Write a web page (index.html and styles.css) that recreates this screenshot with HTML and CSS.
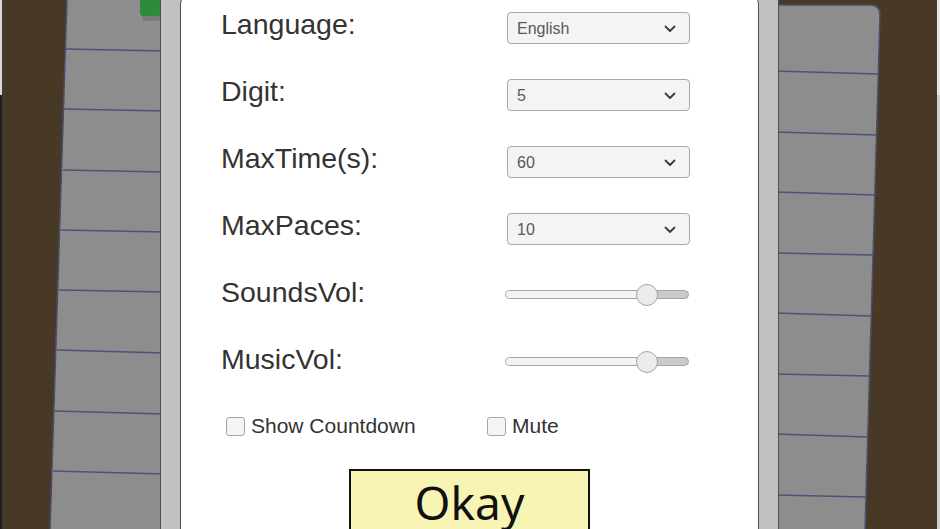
FILE: index.html
```html
<!DOCTYPE html>
<html>
<head>
    <title>Settings</title>
    <link rel="stylesheet" href="styles.css">
</head>
<body>
    <svg class="scene" width="940" height="529" viewBox="0 0 940 529">
        <rect x="0" y="0" width="940" height="529" fill="#473925"/>
        <rect x="0" y="0" width="2" height="95" fill="#d8d8d8"/>
        <rect x="0" y="95" width="2" height="434" fill="#1e1e1e"/>
        <rect x="937" y="0" width="3" height="95" fill="#e6e6e6"/>
        <rect x="937" y="95" width="3" height="434" fill="#cfcfcf"/>

        <!-- left board -->
        <polygon points="67,-2 170,-2 170,531 50,531" fill="#8d8d8d" stroke="#4d4d6e" stroke-width="1.5"/>
        <g stroke="#50507a" stroke-width="1.5">
            <line x1="66" y1="49" x2="165" y2="51"/>
            <line x1="64" y1="109" x2="165" y2="111"/>
            <line x1="63" y1="170" x2="165" y2="172"/>
            <line x1="61" y1="230" x2="165" y2="232"/>
            <line x1="59" y1="290" x2="165" y2="292"/>
            <line x1="57" y1="350" x2="165" y2="353"/>
            <line x1="55" y1="411" x2="165" y2="414"/>
            <line x1="53" y1="471" x2="165" y2="474"/>
        </g>
        <rect x="142" y="0" width="19" height="21" rx="4" fill="#7a7a7a"/>
        <path d="M140 -4 H160 V13 Q160 16 157 16 H143 Q140 16 140 13 Z" fill="#2e8a3c"/>

        <!-- right board -->
        <path d="M775 5 H870 Q880 5 880 15 L865 531 H775 Z" fill="#8d8d8d" stroke="#4d4d6e" stroke-width="1.5"/>
        <g stroke="#50507a" stroke-width="1.5">
            <line x1="775" y1="71" x2="879" y2="74"/>
            <line x1="775" y1="132" x2="877" y2="135"/>
            <line x1="775" y1="192" x2="875" y2="195"/>
            <line x1="775" y1="253" x2="873" y2="255"/>
            <line x1="775" y1="313" x2="871" y2="316"/>
            <line x1="775" y1="374" x2="869" y2="376"/>
            <line x1="775" y1="434" x2="868" y2="437"/>
            <line x1="775" y1="495" x2="866" y2="497"/>
        </g>
    </svg>

    <div class="frame">
        <div class="panel">
            <div class="row">
                <span class="label">Language:</span>
                <div class="select">
                    <span>English</span>
                    <svg class="chevron" width="12" height="8" viewBox="0 0 12 8"><path d="M1.5 1.5 L6 6 L10.5 1.5" fill="none" stroke="#3c3c3c" stroke-width="1.8" stroke-linecap="round" stroke-linejoin="round"/></svg>
                </div>
            </div>
            <div class="row">
                <span class="label">Digit:</span>
                <div class="select">
                    <span>5</span>
                    <svg class="chevron" width="12" height="8" viewBox="0 0 12 8"><path d="M1.5 1.5 L6 6 L10.5 1.5" fill="none" stroke="#3c3c3c" stroke-width="1.8" stroke-linecap="round" stroke-linejoin="round"/></svg>
                </div>
            </div>
            <div class="row">
                <span class="label">MaxTime(s):</span>
                <div class="select">
                    <span>60</span>
                    <svg class="chevron" width="12" height="8" viewBox="0 0 12 8"><path d="M1.5 1.5 L6 6 L10.5 1.5" fill="none" stroke="#3c3c3c" stroke-width="1.8" stroke-linecap="round" stroke-linejoin="round"/></svg>
                </div>
            </div>
            <div class="row">
                <span class="label">MaxPaces:</span>
                <div class="select">
                    <span>10</span>
                    <svg class="chevron" width="12" height="8" viewBox="0 0 12 8"><path d="M1.5 1.5 L6 6 L10.5 1.5" fill="none" stroke="#3c3c3c" stroke-width="1.8" stroke-linecap="round" stroke-linejoin="round"/></svg>
                </div>
            </div>
            <div class="row">
                <span class="label">SoundsVol:</span>
                <div class="slider">
                    <div class="fill" style="width: 77%"></div>
                    <div class="thumb" style="left: 77%"></div>
                </div>
            </div>
            <div class="row">
                <span class="label">MusicVol:</span>
                <div class="slider">
                    <div class="fill" style="width: 77%"></div>
                    <div class="thumb" style="left: 77%"></div>
                </div>
            </div>

            <div class="checks">
                <label class="check first"><span class="box"></span>Show Countdown</label>
                <label class="check"><span class="box"></span>Mute</label>
            </div>

            <div class="okay">Okay</div>
        </div>
    </div>
</body>
</html>
```

FILE: styles.css
```css
body {
    margin: 0;
    width: 940px;
    height: 529px;
    overflow: hidden;
    position: relative;
    display: flex;
    justify-content: center;
    background: #473925;
    font-family: 'Liberation Sans', Arial, sans-serif;
}
.scene {
    position: absolute;
    left: 0;
    top: 0;
}
.frame {
    position: relative;
    width: 579px;
    height: 560px;
    margin-left: -1px;
    padding: 0 19px;
    background: #c1c1c1;
    border-left: 1px solid #4e4e4e;
    border-right: 1px solid #4e4e4e;
}
.panel {
    margin-top: -8px;
    height: 580px;
    box-sizing: border-box;
    padding: 0 40px;
    background: #fff;
    border: 1px solid #4e4e4e;
    border-radius: 12px 12px 0 0;
}
.row {
    display: grid;
    grid-template-columns: 286px 184px;
    height: 67px;
    align-items: center;
}
.label {
    margin-bottom: 4px;
    font-size: 28.5px;
    color: #333;
}
.select {
    display: flex;
    align-items: center;
    justify-content: space-between;
    width: 183px;
    height: 32px;
    margin-top: 3px;
    box-sizing: border-box;
    padding: 1px 13px 0 9px;
    background: #f4f4f4;
    border: 1px solid #a8a8a8;
    border-radius: 4px;
    font-size: 16px;
    color: #5a5a5a;
}
.slider {
    position: relative;
    width: 184px;
    height: 9px;
    margin-left: -2px;
    box-sizing: border-box;
    background: #c9c9c9;
    border: 1px solid #a5a5a5;
    border-radius: 5px;
}
.fill {
    height: 100%;
    background: #f4f4f4;
    border-radius: 4px 0 0 4px;
}
.thumb {
    position: absolute;
    top: 50%;
    width: 20px;
    height: 20px;
    margin: -11px 0 0 -10px;
    background: #ececec;
    border: 1px solid #a5a5a5;
    border-radius: 50%;
}
.checks {
    display: flex;
    align-items: center;
    height: 62px;
}
.check {
    display: flex;
    align-items: center;
    gap: 6px;
    font-size: 21px;
    color: #333;
}
.check.first {
    width: 261px;
    margin-left: 5px;
}
.box {
    width: 19px;
    height: 19px;
    box-sizing: border-box;
    background: #f4f4f4;
    border: 1px solid #a5a5a5;
    border-radius: 3px;
}
.okay {
    width: 241px;
    height: 72px;
    box-sizing: border-box;
    margin: 12px auto 0;
    background: #f8f4b4;
    border: 2px solid #111;
    font-family: 'Noto Sans', sans-serif;
    font-size: 46px;
    line-height: 62px;
    text-align: center;
    color: #111;
}
```
